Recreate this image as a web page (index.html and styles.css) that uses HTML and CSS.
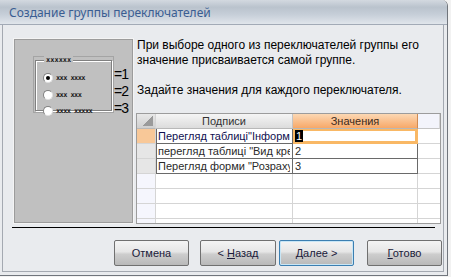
FILE: index.html
```html
<!DOCTYPE html>
<html lang="ru">
<head>
  <meta charset="UTF-8">
  <title>Создание группы переключателей</title>
  <link rel="stylesheet" href="styles.css">
</head>
<body>

  <div class="window">
    <div class="titlebar">Создание группы переключателей</div>

    <div class="client">
      <div class="main">
        <div class="preview">
          <div class="preview-row">
            <div class="frame">
              <div class="groupbox">
                <span class="group-caption">xxxxxx</span>
                <div class="radio-line"><span class="radio checked"></span><span class="dots">xxx xxxx</span></div>
                <div class="radio-line"><span class="radio"></span><span class="dots">xxx xxx</span></div>
                <div class="radio-line"><span class="radio"></span><span class="dots">xxxx xxxxx</span></div>
              </div>
            </div>
            <div class="values">
              <div>=1</div>
              <div>=2</div>
              <div>=3</div>
            </div>
          </div>
        </div>

        <div class="side">
          <p class="hint">При выборе одного из переключателей группы его значение присваивается самой группе.</p>
          <p class="hint">Задайте значения для каждого переключателя.</p>

          <div class="grid">
            <div class="cell sel head-sel"></div>
            <div class="cell head">Подписи</div>
            <div class="cell head head-active">Значения</div>
            <div class="cell head-blank"></div>

            <div class="cell sel sel-current"></div>
            <div class="cell data label current-row"><span class="clip">Перегляд таблиці"Інформація про клієнтів"</span></div>
            <div class="cell data value focus"><span class="marked">1</span></div>
            <div class="cell blank"></div>

            <div class="cell sel sel-row"></div>
            <div class="cell data label"><span class="clip">перегляд таблиці "Вид кредиту"</span></div>
            <div class="cell data value">2</div>
            <div class="cell blank"></div>

            <div class="cell sel sel-row"></div>
            <div class="cell data label"><span class="clip">Перегляд форми "Розрахунок"</span></div>
            <div class="cell data value">3</div>
            <div class="cell blank"></div>

            <div class="cell sel"></div><div class="cell"></div><div class="cell"></div><div class="cell blank"></div>
            <div class="cell sel"></div><div class="cell"></div><div class="cell"></div><div class="cell blank"></div>
            <div class="cell sel"></div><div class="cell"></div><div class="cell"></div><div class="cell blank"></div>
            <div class="cell sel"></div><div class="cell"></div><div class="cell"></div><div class="cell blank"></div>
          </div>
        </div>
      </div>

      <div class="separator"></div>

      <div class="buttons">
        <button class="btn btn-cancel">Отмена</button>
        <button class="btn btn-back">&lt; <u>Н</u>азад</button>
        <button class="btn btn-next default"><u>Д</u>алее &gt;</button>
        <button class="btn btn-finish"><u>Г</u>отово</button>
      </div>
    </div>
  </div>

</body>
</html>
```

FILE: styles.css
```css
body {
  margin: 0;
  background-color: #f2f2f2;
  font-family: "Liberation Sans", Arial, sans-serif;
  font-size: 11px;
}
.window {
  width: 448px;
  height: 276px;
  box-sizing: border-box;
  background-color: #e9ebee;
  border-right: 1px solid #70757c;
  border-bottom: 1px solid #70757c;
  border-top-right-radius: 6px;
  display: flex;
  flex-direction: column;
  overflow: hidden;
}
.titlebar {
  height: 25px;
  flex: none;
  box-sizing: border-box;
  padding: 5px 0 0 9px;
  border-bottom: 1px solid #a2aab6;
  background: linear-gradient(#d3d9e0 0, #bac3cd 30%, #c6ced8 60%, #e0e5eb 100%);
  color: #3a5d92;
  font-family: "Noto Sans", sans-serif;
  font-size: 12px;
  line-height: 16px;
}
.client {
  flex: 1;
  margin: 0 3px 3px 2px;
  border: 1px solid #a4a9b1;
  border-top: none;
  padding: 13px 0 0 10px;
}

/* upper area */
.main {
  display: flex;
  gap: 2px;
  height: 186px;
}
.preview {
  width: 121px;
  box-sizing: border-box;
  border: 1px solid #f4f4f4;
  box-shadow: inset 0 0 0 1px #9c9c9c;
  background-color: #c0c0c0;
  padding: 17px 0 0 19px;
}
.preview-row {
  display: flex;
}
.frame {
  width: 81px;
  height: 57px;
  box-sizing: border-box;
  border: 1px solid #a4a4a4;
  padding: 3px 1px 1px 1px;
}
.groupbox {
  height: 100%;
  box-sizing: border-box;
  border: 1px solid #808080;
  box-shadow: 1px 1px 0 #fff, inset 1px 1px 0 #fff;
  position: relative;
  padding: 9px 0 0 7px;
}
.group-caption {
  position: absolute;
  top: -5px;
  left: 8px;
  padding: 0 2px;
  background-color: #c0c0c0;
  font-family: "DejaVu Sans Mono", monospace;
  font-size: 7px;
  font-weight: bold;
  line-height: 8px;
  color: #202020;
}
.radio-line {
  display: flex;
  align-items: center;
  gap: 3px;
  height: 16.5px;
}
.radio {
  width: 10px;
  height: 10px;
  flex: none;
  box-sizing: border-box;
  border-radius: 50%;
  background-color: #fff;
  border: 1px solid #808080;
  border-right-color: #e0e0e0;
  border-bottom-color: #e0e0e0;
  position: relative;
}
.radio.checked::after {
  content: "";
  position: absolute;
  left: 2px;
  top: 2px;
  width: 4px;
  height: 4px;
  border-radius: 50%;
  background-color: #000;
}
.dots {
  font-family: "DejaVu Sans Mono", monospace;
  font-size: 7px;
  font-weight: bold;
  color: #202020;
  letter-spacing: -0.6px;
  white-space: nowrap;
}
.values {
  padding-top: 10px;
  font-size: 14px;
  line-height: 17px;
  color: #000;
  letter-spacing: -1px;
}

.side {
  flex: 1;
  display: flex;
  flex-direction: column;
  margin-right: 2px;
}
.hint {
  margin: 0 0 15px 1px;
  font-size: 12px;
  line-height: 15px;
  color: #000;
}

/* datasheet */
.grid {
  margin-top: auto;
  height: 116px;
  box-sizing: border-box;
  border: 1px solid #9c9c9c;
  display: grid;
  grid-template-columns: 19px 137px 125px 22px;
  grid-auto-rows: 15px;
  overflow: hidden;
  background-color: #fff;
}
.cell {
  box-sizing: border-box;
  border-right: 1px solid #d5d5d5;
  border-bottom: 1px solid #d5d5d5;
  white-space: nowrap;
  overflow: hidden;
  line-height: 14px;
  padding-left: 2px;
  color: #222;
}
.cell.blank {
  border-right: none;
}
.sel {
  background-color: #f5f6fd;
  padding: 0;
}
.head {
  text-align: center;
  padding: 0;
  color: #333;
  background: linear-gradient(#f5f5f5, #dcdcdc);
  border-right-color: #c4c4c4;
  border-bottom-color: #b8b8b8;
}
.head-sel {
  background:
    linear-gradient(to bottom right, transparent 50%, #9a9a9a 50%) right 2px bottom 2px / 10px 10px no-repeat,
    linear-gradient(#e8e8e8, #cfcfcf);
  border-bottom-color: #b8b8b8;
}
.head-active {
  background: linear-gradient(#fcd8b4, #f7a868);
  border-right-color: #d08a50;
  color: #3a2a20;
}
.head-blank {
  background-color: #f3f4fb;
  border-bottom-color: #c4c4c4;
}
.sel-current {
  background-color: #f8c898;
}
.sel-row {
  background-color: #e6e6e6;
}
.data {
  border-right-color: #6a6a6a;
  border-bottom-color: #6a6a6a;
  color: #2a2a2a;
}
.label {
  border-left: 1px solid #6a6a6a;
  padding-left: 1px;
}
.clip {
  display: block;
  width: 132px;
  overflow: hidden;
}
.current-row {
  color: #101050;
}
.focus {
  box-shadow: inset 0 0 0 2px #f9b865;
  border-color: #f9b865;
}
.marked {
  background-color: #000;
  color: #fff;
  padding: 0 1px;
}

.separator {
  margin: 3px 8px 0 -1px;
  border-top: 1px solid #000;
}

.buttons {
  display: flex;
  margin-top: 12px;
  padding-left: 101px;
}
.btn {
  width: 75px;
  height: 26px;
  box-sizing: border-box;
  border: 1px solid #707070;
  border-radius: 2px;
  background: linear-gradient(#f4f4f4 0, #e6e6e6 45%, #cdcdcd 55%, #b9b9b9 100%);
  font-family: "Liberation Sans", Arial, sans-serif;
  font-size: 11px;
  color: #1a1a3a;
  padding: 0;
}
.btn-back {
  margin-left: 11px;
  width: 76px;
}
.btn-next {
  margin-left: 3px;
}
.btn-finish {
  margin-left: 13px;
}
.default {
  border-color: #3c7fb1;
  box-shadow: inset 0 0 0 1px #c8e6f6;
}
```
